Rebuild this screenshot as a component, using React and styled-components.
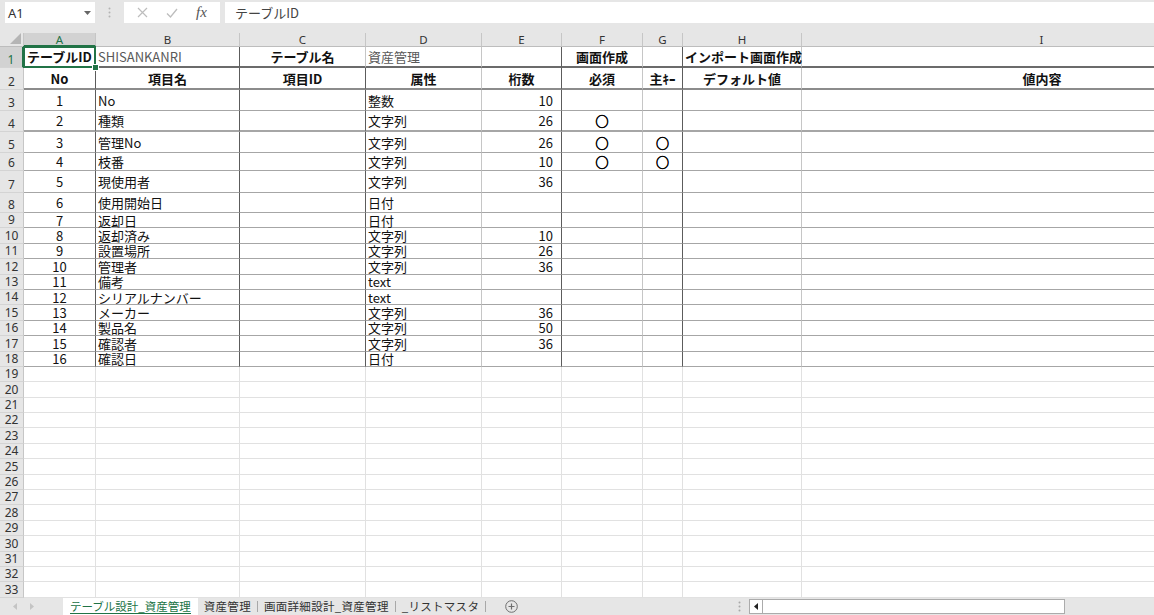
import React from 'react';
import styled, { createGlobalStyle, css } from 'styled-components';

const GlobalStyle = createGlobalStyle`
    html, body {
        margin: 0;
        padding: 0;
        overflow: hidden;
        background: #e6e6e6;
    }
    body {
        font-family: "Noto Sans CJK JP", "Noto Sans", sans-serif;
    }
`;

const GREEN = '#217346';
const DARK = '1px solid #5c5c5c';
const LIGHT = '1px solid #c6c6c6';
const GRID = '1px solid #e1e1e1';

// column widths A..I (I runs past the window edge)
const COL_WIDTHS = [72, 144, 126, 116, 80, 81, 40, 119, 480];
const LETTERS = ['A', 'B', 'C', 'D', 'E', 'F', 'G', 'H', 'I'];
const ROW_HEIGHTS = [21, 22, 21, 21, 21, 18, 22, 20, ...Array(25).fill(15.4)];

// right edge style per column, for the bordered table area
const RIGHT_ROW1 = [LIGHT, DARK, LIGHT, LIGHT, DARK, LIGHT, DARK, LIGHT, 'none'];
const RIGHT_BODY = [DARK, DARK, DARK, LIGHT, DARK, LIGHT, DARK, LIGHT, 'none'];

const header1 = [
    { t: 'テーブルID', b: true, a: 'center' },
    { t: 'SHISANKANRI', m: true },
    { t: 'テーブル名', b: true, a: 'center' },
    { t: '資産管理', m: true },
    {},
    { t: '画面作成', b: true, a: 'center' },
    {},
    { t: 'インポート画面作成', b: true },
    {},
];

const header2 = ['No', '項目名', '項目ID', '属性', '桁数', '必須', '主ｷｰ', 'デフォルト値', '値内容']
    .map(t => ({ t, b: true, a: 'center' }));

const items = [
    ['No', '整数', '10'],
    ['種類', '文字列', '26', true],
    ['管理No', '文字列', '26', true, true],
    ['枝番', '文字列', '10', true, true],
    ['現使用者', '文字列', '36'],
    ['使用開始日', '日付'],
    ['返却日', '日付'],
    ['返却済み', '文字列', '10'],
    ['設置場所', '文字列', '26'],
    ['管理者', '文字列', '36'],
    ['備考', 'text'],
    ['シリアルナンバー', 'text'],
    ['メーカー', '文字列', '36'],
    ['製品名', '文字列', '50'],
    ['確認者', '文字列', '36'],
    ['確認日', '日付'],
];

const bodyRows = items.map(([name, type, len, req, key], i) => [
    { t: String(i + 1), a: 'center' },
    { t: name },
    {},
    { t: type },
    { t: len, a: 'right' },
    { t: req ? '○' : '', a: 'center', mark: true },
    { t: key ? '○' : '', a: 'center', mark: true },
    {},
    {},
]);

const allRows = [header1, header2, ...bodyRows];

//styled-components
const Page = styled.div`
    width: 1154px;
    height: 615px;
    display: flex;
    flex-direction: column;
    background: #e6e6e6;
    overflow: hidden;
`;

const FormulaBar = styled.div`
    height: 33px;
    box-sizing: border-box;
    padding: 2px 0 10px 5px;
    display: flex;
    align-items: stretch;
`;

const NameBox = styled.div`
    width: 90px;
    background: #fff;
    display: flex;
    align-items: center;
    justify-content: space-between;
    padding: 0 4px 0 3px;
    box-sizing: border-box;
    font-family: "Noto Sans", sans-serif;
    font-size: 13px;
    color: #333;
`;

const Grip = styled.div`
    width: 29px;
    display: flex;
    align-items: center;
    justify-content: center;
`;

const ButtonBox = styled.div`
    width: 96px;
    background: #fff;
    display: flex;
    align-items: center;
    justify-content: space-around;
    padding: 0 4px;
    box-sizing: border-box;
`;

const FxLabel = styled.span`
    font-family: "Liberation Serif", serif;
    font-style: italic;
    font-size: 15px;
    color: #555;
`;

const FormulaInput = styled.div`
    flex: 1;
    margin-left: 5px;
    background: #fff;
    display: flex;
    align-items: center;
    padding-left: 10px;
    font-size: 13px;
    color: #444;
`;

const Sheet = styled.div`
    flex: 1;
    display: grid;
    grid-template-columns: 24px ${COL_WIDTHS.map(w => `${w}px`).join(' ')};
    grid-template-rows: 14px ${ROW_HEIGHTS.map(h => `${h}px`).join(' ')};
    background: #fff;
    overflow: hidden;
`;

const Corner = styled.div`
    background: #e6e6e6;
    border-right: 1px solid #c6c6c6;
    border-bottom: 1px solid #bdbdbd;
    display: flex;
    align-items: flex-end;
    justify-content: flex-end;
    padding: 0 2px 2px 0;
`;

const ColHead = styled.div`
    background: ${p => (p.$active ? '#d2d2d2' : '#e6e6e6')};
    color: ${p => (p.$active ? GREEN : '#333')};
    border-right: 1px solid #c6c6c6;
    border-bottom: ${p => (p.$active ? `2px solid ${GREEN}` : '1px solid #bdbdbd')};
    font-family: "Noto Sans", sans-serif;
    font-size: 11.5px;
    line-height: 11px;
    display: flex;
    align-items: center;
    justify-content: center;
`;

const RowHead = styled.div`
    background: ${p => (p.$active ? '#d2d2d2' : '#e6e6e6')};
    color: ${p => (p.$active ? GREEN : '#333')};
    border-right: ${p => (p.$active ? `2px solid ${GREEN}` : '1px solid #c6c6c6')};
    border-bottom: 1px solid #d4d4d4;
    font-family: "Noto Sans", sans-serif;
    font-size: 12px;
    line-height: 12px;
    display: flex;
    align-items: flex-end;
    justify-content: center;
    padding-bottom: 1px;
    box-sizing: border-box;
`;

const Cell = styled.div`
    display: flex;
    align-items: center;
    justify-content: ${p => ({ center: 'center', right: 'flex-end' }[p.$align] || 'flex-start')};
    padding: 0 ${p => (p.$align === 'right' ? '8px' : '2px')};
    border-right: ${p => p.$rb};
    border-bottom: ${p => p.$bb};
    font-size: 13px;
    font-weight: ${p => (p.$bold ? 700 : 400)};
    color: ${p => (p.$muted ? '#595959' : '#111')};
    line-height: 13px;
    white-space: nowrap;
    min-width: 0;
    position: relative;

    ${p => p.$mark && css`
        font-size: 13px;
        color: #000;
        -webkit-text-stroke: 0.7px #000;
    `}

    ${p => p.$selected && css`
        &::after {
            content: '';
            position: absolute;
            inset: -1px -1px -2px -1px;
            border: 2px solid ${GREEN};
            pointer-events: none;
        }
        &::before {
            content: '';
            position: absolute;
            right: -4px;
            bottom: -5px;
            width: 5px;
            height: 5px;
            background: ${GREEN};
            border: 1px solid #fff;
            z-index: 2;
        }
    `}
`;

const TabBar = styled.div`
    height: 17px;
    display: flex;
    align-items: stretch;
    background: #e6e6e6;
    font-size: 11.5px;
    color: #333;
`;

const NavArrows = styled.div`
    width: 63px;
    display: flex;
    align-items: center;
    gap: 13px;
    padding-left: 13px;
    box-sizing: border-box;
`;

const Tab = styled.div`
    display: flex;
    align-items: center;
    padding: 0 ${p => (p.$active ? '7px' : '6px')};
    background: ${p => (p.$active ? '#fff' : 'transparent')};
    color: ${p => (p.$active ? GREEN : '#333')};
    white-space: nowrap;
    letter-spacing: ${p => (p.$active ? '0' : '0.3px')};

    & > span {
        border-bottom: ${p => (p.$active ? `1px solid ${GREEN}` : '1px solid transparent')};
        line-height: 14px;
    }
`;

const TabSep = styled.div`
    width: 1px;
    margin: 3px 0;
    background: #a8a8a8;
`;

const AddSheet = styled.div`
    width: 50px;
    display: flex;
    align-items: center;
    justify-content: center;
`;

const ScrollArea = styled.div`
    flex: 1;
    display: flex;
    align-items: center;
    justify-content: flex-end;
    padding-right: 89px;
`;

const ScrollTrack = styled.div`
    display: flex;
    height: 13px;
    border: 1px solid #ababab;
    background: #fff;
    margin-left: 8px;
`;

const ScrollBtn = styled.div`
    width: 12px;
    border-right: 1px solid #ababab;
    display: flex;
    align-items: center;
    justify-content: center;
`;

const ScrollThumb = styled.div`
    width: 301px;
`;

const Dots = ({ color = '#b3b3b3' }) => (
    <svg width="3" height="11" viewBox="0 0 3 11">
        <circle cx="1.5" cy="1.5" r="1" fill={color} />
        <circle cx="1.5" cy="5.5" r="1" fill={color} />
        <circle cx="1.5" cy="9.5" r="1" fill={color} />
    </svg>
);

const cellBorders = (r, c) => {
    if (r >= allRows.length) return { rb: GRID, bb: GRID };
    const rb = r === 0 ? RIGHT_ROW1[c] : RIGHT_BODY[c];
    let bb = '1px solid #a6a6a6';
    if (r === 0) bb = '2px solid #6b6b6b';
    else if (r === 1) bb = '2px solid #8c8c8c';
    else if (r === 3) bb = '2px solid #a6a6a6';
    return { rb, bb };
};

const App = () => {
    return (
        <Page>
            <GlobalStyle />
            <FormulaBar>
                <NameBox>
                    A1
                    <svg width="7" height="4" viewBox="0 0 7 4"><path d="M0 0h7L3.5 4z" fill="#666" /></svg>
                </NameBox>
                <Grip><Dots /></Grip>
                <ButtonBox>
                    <svg width="11" height="11" viewBox="0 0 11 11">
                        <path d="M1 1l9 9M10 1l-9 9" stroke="#bdbdbd" strokeWidth="1.2" />
                    </svg>
                    <svg width="12" height="10" viewBox="0 0 12 10">
                        <path d="M1 5.5l3.5 3.5L11 1" stroke="#bdbdbd" strokeWidth="1.3" fill="none" />
                    </svg>
                    <FxLabel>fx</FxLabel>
                </ButtonBox>
                <FormulaInput>テーブルID</FormulaInput>
            </FormulaBar>

            <Sheet>
                <Corner>
                    <svg width="11" height="11" viewBox="0 0 11 11"><path d="M11 0v11H0z" fill="#b5b5b5" /></svg>
                </Corner>
                {LETTERS.map(l => (
                    <ColHead key={l} $active={l === 'A'}>{l}</ColHead>
                ))}

                {ROW_HEIGHTS.map((_, r) => (
                    <React.Fragment key={r}>
                        <RowHead $active={r === 0}>{r + 1}</RowHead>
                        {LETTERS.map((l, c) => {
                            const data = (allRows[r] && allRows[r][c]) || {};
                            const { rb, bb } = cellBorders(r, c);
                            return (
                                <Cell
                                    key={l}
                                    $align={data.a}
                                    $bold={data.b}
                                    $muted={data.m}
                                    $mark={data.mark}
                                    $rb={rb}
                                    $bb={bb}
                                    $selected={r === 0 && c === 0}
                                >
                                    {data.t}
                                </Cell>
                            );
                        })}
                    </React.Fragment>
                ))}
            </Sheet>

            <TabBar>
                <NavArrows>
                    <svg width="4" height="7" viewBox="0 0 4 7"><path d="M4 0v7L0 3.5z" fill="#c4c4c4" /></svg>
                    <svg width="4" height="7" viewBox="0 0 4 7"><path d="M0 0v7l4-3.5z" fill="#c4c4c4" /></svg>
                </NavArrows>
                <Tab $active><span>テーブル設計_資産管理</span></Tab>
                <Tab><span>資産管理</span></Tab>
                <TabSep />
                <Tab><span>画面詳細設計_資産管理</span></Tab>
                <TabSep />
                <Tab><span>_リストマスタ</span></Tab>
                <TabSep />
                <AddSheet>
                    <svg width="13" height="13" viewBox="0 0 13 13">
                        <circle cx="6.5" cy="6.5" r="5.8" stroke="#6e6e6e" strokeWidth="1" fill="none" />
                        <path d="M6.5 3.5v6M3.5 6.5h6" stroke="#6e6e6e" strokeWidth="1.2" />
                    </svg>
                </AddSheet>
                <ScrollArea>
                    <Dots color="#a8a8a8" />
                    <ScrollTrack>
                        <ScrollBtn>
                            <svg width="4" height="7" viewBox="0 0 4 7"><path d="M4 0v7L0 3.5z" fill="#222" /></svg>
                        </ScrollBtn>
                        <ScrollThumb />
                    </ScrollTrack>
                </ScrollArea>
            </TabBar>
        </Page>
    );
};

export default App;
